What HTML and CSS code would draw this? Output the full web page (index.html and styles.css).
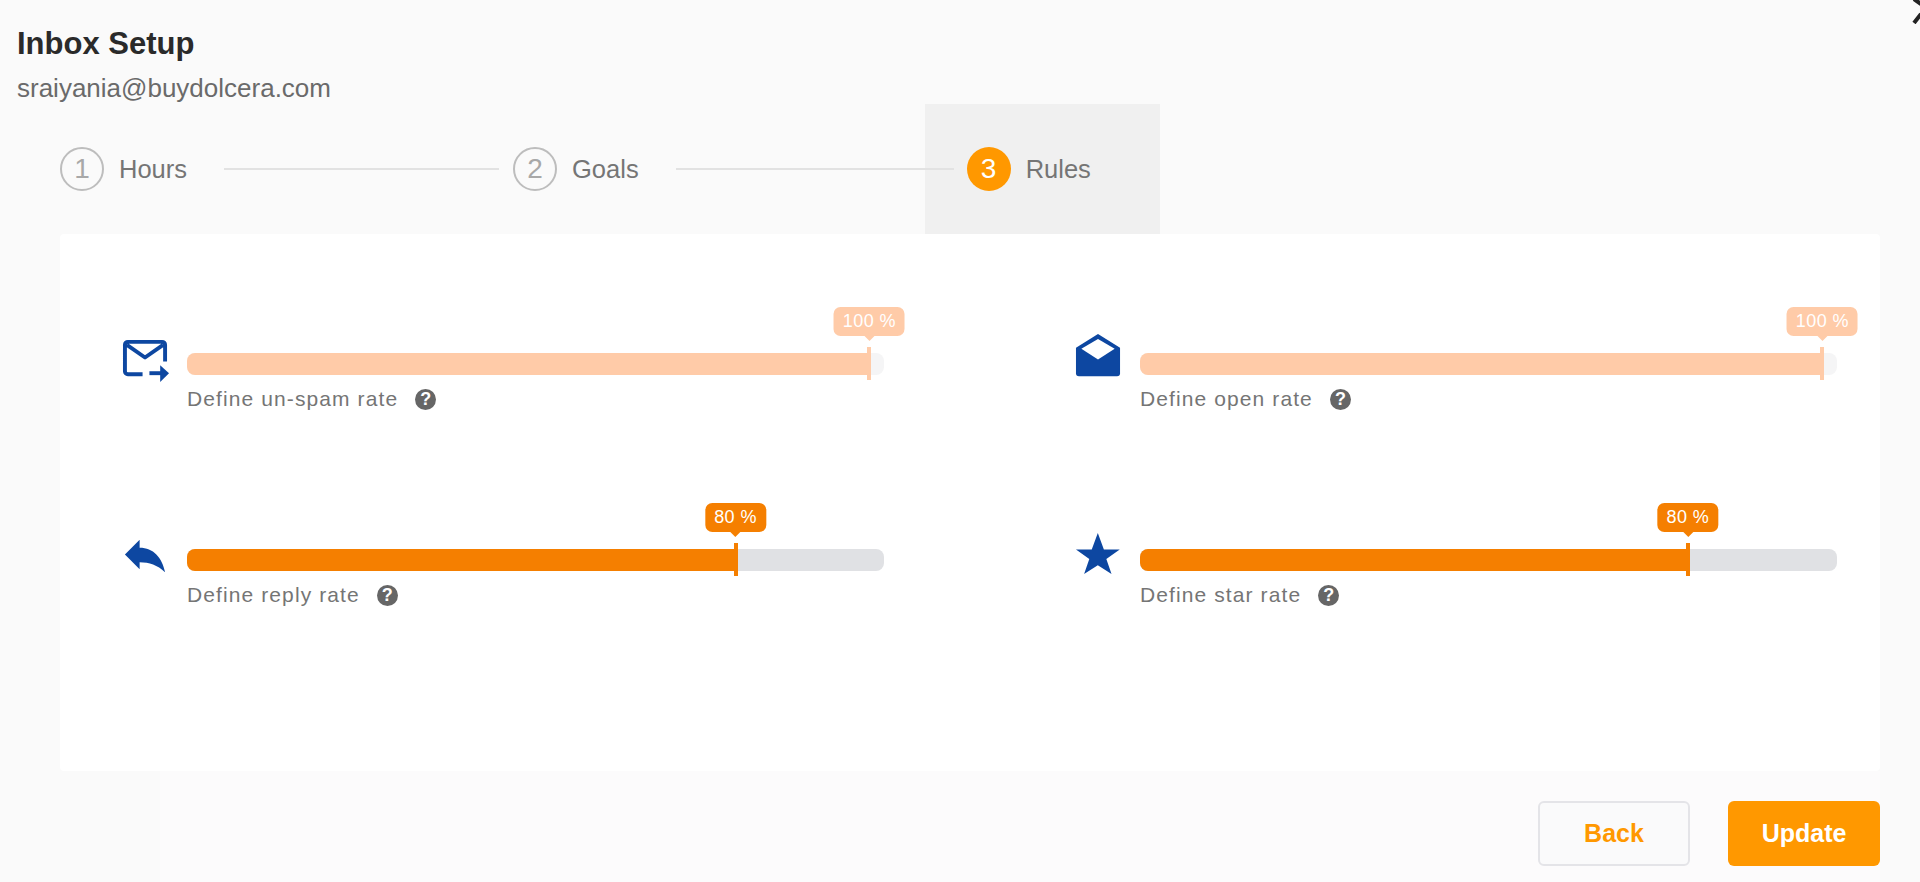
FILE: index.html
```html
<!DOCTYPE html>
<html lang="en">
<head>
<meta charset="utf-8">
<title>Inbox Setup</title>
<link rel="stylesheet" href="styles.css">
</head>
<body>
<div class="page">
  <svg class="close" viewBox="0 0 10 24" aria-hidden="true"><path d="M4 -1 L11 4 M4 23 L11 14"/></svg>
  <header class="head">
    <h1 class="title">Inbox Setup</h1>
    <p class="email">sraiyania@buydolcera.com</p>
  </header>
  <nav class="steps">
    <div class="step"><span class="num">1</span><span class="step-label">Hours</span></div>
    <div class="line line-first"></div>
    <div class="step"><span class="num">2</span><span class="step-label">Goals</span></div>
    <div class="line line-second"></div>
    <div class="step step-active"><span class="num num-active">3</span><span class="step-label">Rules</span></div>
  </nav>
  <main class="card">
    <section class="rule">
      <svg class="icon" viewBox="0 0 48 50" aria-hidden="true">
        <path class="ol" d="M21 41H6a3 3 0 0 1-3-3V11a3 3 0 0 1 3-3H41a3 3 0 0 1 3 3V28M5 11L23.5 24 42 11"/>
        <path class="ol" d="M28 40H40"/>
        <path class="fl" d="M39 32L48 40 39 49Z"/>
      </svg>
      <div class="body">
        <div class="track track-done">
          <div class="fill fill-done" style="width:97.9%"><span class="handle"></span><span class="tip">100 %</span></div>
        </div>
        <div class="label"><span>Define un-spam rate</span><span class="help">?</span></div>
      </div>
    </section>
    <section class="rule">
      <svg class="icon" viewBox="0 0 48 50" aria-hidden="true">
        <path class="fl" d="M23.5 0L46 14V40a3 3 0 0 1-3 3H4a3 3 0 0 1-3-3V14Z"/>
        <path class="wh" d="M23.5 5L40.5 15 23.5 26 6.5 15Z"/>
      </svg>
      <div class="body">
        <div class="track track-done">
          <div class="fill fill-done" style="width:97.9%"><span class="handle"></span><span class="tip">100 %</span></div>
        </div>
        <div class="label"><span>Define open rate</span><span class="help">?</span></div>
      </div>
    </section>
    <section class="rule">
      <svg class="icon" viewBox="0 0 48 50" aria-hidden="true">
        <path class="fl" d="M3 25L18 10V18C32 18 41 28 44 43 36 36 28 33 18 33V40Z"/>
      </svg>
      <div class="body">
        <div class="track">
          <div class="fill" style="width:78.7%"><span class="handle"></span><span class="tip">80 %</span></div>
        </div>
        <div class="label"><span>Define reply rate</span><span class="help">?</span></div>
      </div>
    </section>
    <section class="rule">
      <svg class="icon" viewBox="0 0 48 50" aria-hidden="true">
        <path class="fl" d="M23.3 3L29.5 20H45.7L32 29.5 37.3 45 23.3 36 9.3 45 14.6 29.5 1 20H17.1Z"/>
      </svg>
      <div class="body">
        <div class="track">
          <div class="fill" style="width:78.6%"><span class="handle"></span><span class="tip">80 %</span></div>
        </div>
        <div class="label"><span>Define star rate</span><span class="help">?</span></div>
      </div>
    </section>
  </main>
  <footer class="foot">
    <button class="btn btn-back" type="button">Back</button>
    <button class="btn btn-update" type="button">Update</button>
  </footer>
</div>
</body>
</html>
```
FILE: styles.css
```css
* { box-sizing: border-box; }
html, body { margin: 0; padding: 0; }
body {
  background: #fafafa;
  font-family: "Liberation Sans", Arial, sans-serif;
  overflow: hidden;
}
.page {
  position: relative;
  width: 1920px;
  height: 882px;
  background: #fafafa;
  display: flex;
  flex-direction: column;
}
.close {
  position: absolute;
  top: 0;
  right: 0;
  width: 10px;
  height: 24px;
}
.close path { stroke: #222; stroke-width: 4; fill: none; }

.head {
  height: 104px;
  padding: 24px 0 0 17px;
}
.title {
  margin: 0;
  font-size: 31px;
  line-height: 40px;
  font-weight: 700;
  color: #2a2a2a;
}
.email {
  margin: 8px 0 0;
  font-size: 26px;
  line-height: 32px;
  color: #6a6a6a;
}

.steps {
  display: flex;
  align-items: center;
  height: 130px;
  margin-left: 60px;
}
.step {
  display: flex;
  align-items: center;
  gap: 15px;
}
.step-active {
  align-self: stretch;
  margin-left: -29px;
  padding: 0 69px 0 42px;
  background: #f0f0f0;
}
.num {
  width: 44px;
  height: 44px;
  border: 2px solid #bdbdbd;
  border-radius: 50%;
  display: flex;
  align-items: center;
  justify-content: center;
  font-size: 28px;
  color: #a8a8a8;
}
.num-active {
  border: 0;
  background: #ff9800;
  color: #fff;
}
.step-label {
  font-size: 25.5px;
  color: #757575;
}
.line {
  position: relative;
  z-index: 1;
  height: 2px;
  background: #e2e2e2;
  margin-left: 37px;
}
.line-first { width: 275px; margin-right: 14px; }
.line-second { width: 278px; }

.card {
  height: 537px;
  margin: 0 40px 0 60px;
  padding: 119px 0 0 62px;
  background: #fff;
  border-radius: 4px;
  display: grid;
  grid-template-columns: 953px 1fr;
  grid-auto-rows: 196px;
}
.rule {
  display: flex;
  align-items: flex-start;
  gap: 18px;
}
.icon {
  flex: none;
  width: 47px;
  height: 49px;
  margin-top: -19px;
}
.ol { fill: none; stroke: #0d47a1; stroke-width: 4; stroke-linejoin: round; }
.fl { fill: #0d47a1; }
.wh { fill: #fff; }
.body { width: 697px; }
.track {
  height: 22px;
  border-radius: 8px;
  background: #e0e1e4;
}
.track-done { background: #f5f5f6; }
.fill {
  position: relative;
  height: 22px;
  border-radius: 8px 0 0 8px;
  background: #f57f00;
  color: #f57f00;
}
.fill-done {
  background: #ffcba8;
  color: #ffcba8;
}
.handle {
  position: absolute;
  right: -2px;
  top: -6px;
  width: 4px;
  height: 33px;
  background: currentColor;
}
.tip {
  position: absolute;
  right: 0;
  top: -46px;
  transform: translateX(50%);
  padding: 0 9px;
  height: 29px;
  line-height: 28px;
  border-radius: 7px;
  background: currentColor;
  font-size: 18px;
  letter-spacing: 0.4px;
  white-space: nowrap;
}
.tip::first-line { color: #fff; }
.tip::after {
  content: "";
  position: absolute;
  left: 50%;
  bottom: -5px;
  margin-left: -6px;
  border-top: 6px solid currentColor;
  border-left: 6px solid transparent;
  border-right: 6px solid transparent;
}
.label {
  display: flex;
  align-items: center;
  gap: 17px;
  margin-top: 12px;
  font-size: 21px;
  line-height: 24px;
  letter-spacing: 1.1px;
  color: #757575;
}
.help {
  width: 21px;
  height: 21px;
  border-radius: 50%;
  background: #666;
  color: #fff;
  font-size: 18px;
  font-weight: 700;
  line-height: 21px;
  letter-spacing: 0;
  text-align: center;
}

.foot {
  flex: 1;
  margin: 0 40px 0 160px;
  padding-top: 30px;
  background: #fcfbfc;
  display: flex;
  justify-content: flex-end;
  align-items: flex-start;
  gap: 38px;
}
.btn {
  width: 152px;
  height: 65px;
  border-radius: 6px;
  font-family: inherit;
  font-size: 25px;
  font-weight: 700;
}
.btn-back {
  background: #fafafb;
  border: 2px solid #e4e4e8;
  color: #ff9800;
}
.btn-update {
  background: #ff9800;
  border: 0;
  color: #fff;
}
```
